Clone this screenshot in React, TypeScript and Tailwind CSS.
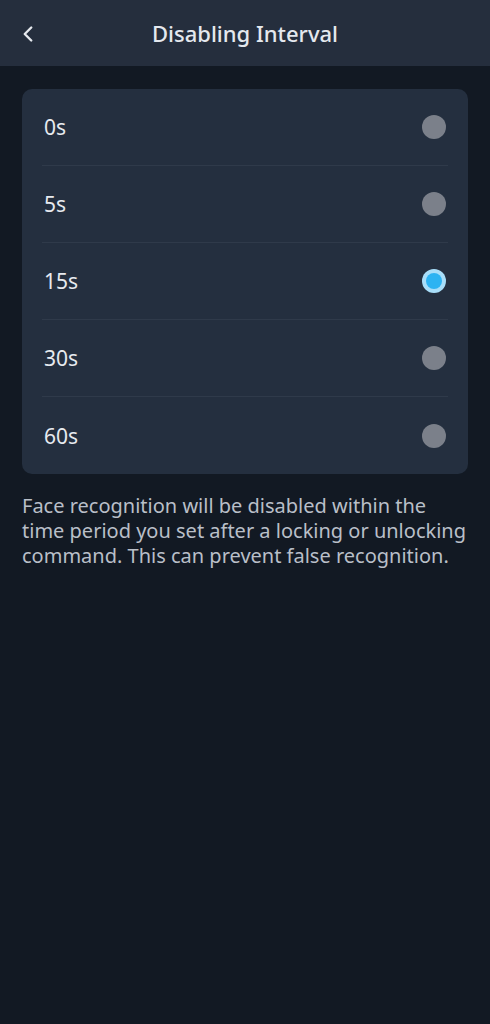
import { ChevronLeft } from 'lucide-react'

const options = ['0s', '5s', '15s', '30s', '60s']

export default function App() {
  const selected = '15s'

  return (
    <div className="min-h-[1024px] w-full bg-[#121923] font-['Noto_Sans',sans-serif]">
      <div className="relative flex h-[66px] items-center justify-center bg-[#252e3d]">
        <button className="absolute left-[15px] top-[21px] text-[#e6e9ee]">
          <ChevronLeft className="h-[26px] w-[26px]" strokeWidth={2.2} />
        </button>
        <h1 className="text-[22px] font-medium text-[#e4e8ee]">Disabling Interval</h1>
      </div>

      <div className="px-[22px] pt-[23px]">
        <div className="rounded-[10px] bg-[#242f3f] px-[20px]">
          {options.map((opt, i) => (
            <div
              key={opt}
              className={
                'flex h-[77px] items-center justify-between ' +
                (i < options.length - 1 ? 'border-b border-[#2f3a4a]' : '')
              }
            >
              <span className="pl-[2px] pt-[2px] text-[21px] text-[#e7eaef]">{opt}</span>
              {opt === selected ? (
                <span className="mr-[2px] flex h-[24px] w-[24px] items-center justify-center rounded-full bg-[#a8def9]">
                  <span className="h-[16px] w-[16px] rounded-full bg-[#2cb3f2]" />
                </span>
              ) : (
                <span className="mr-[2px] h-[24px] w-[24px] rounded-full bg-[#7b808a]" />
              )}
            </div>
          ))}
        </div>

        <p className="mt-[19px] text-[20px] leading-[25px] text-[#b9bfc8]">
          Face recognition will be disabled within the time period you set after a locking or unlocking command. This can prevent false recognition.
        </p>
      </div>
    </div>
  )
}
